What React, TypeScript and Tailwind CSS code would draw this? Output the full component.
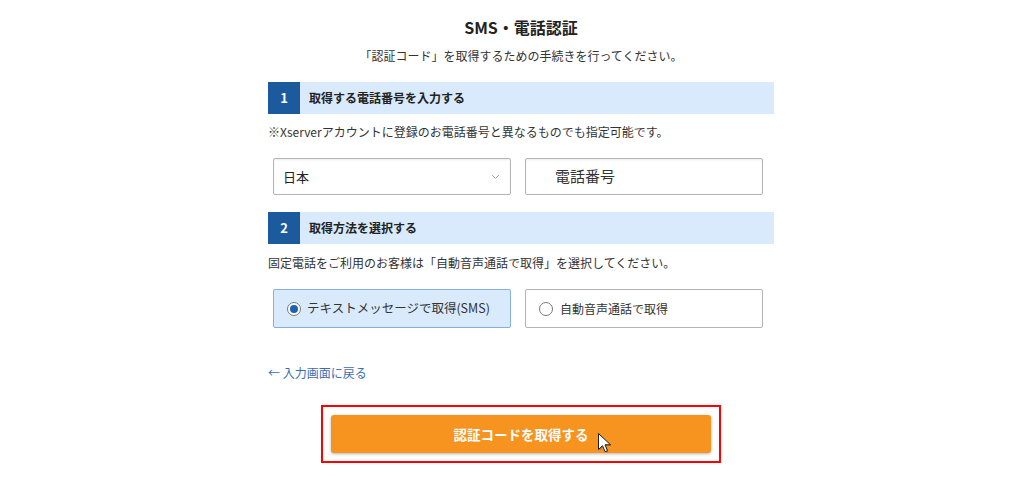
import React from "react";

export default function App() {
  const font = { fontFamily: '"Noto Sans CJK JP", "Noto Sans", sans-serif' };
  return (
    <div className="w-[1032px] h-[478px] bg-white overflow-hidden relative text-[#333]" style={font}>
      <div className="ml-[268px] w-[506px] flex flex-col">
        <h1 className="pt-[15px] text-center text-[16px] leading-[24px] font-bold text-[#222]">SMS・電話認証</h1>
        <p className="mt-[7px] text-center text-[12px] leading-[20px]">「認証コード」を取得するための手続きを行ってください。</p>

        <div className="mt-[16px] h-[32px] flex items-center bg-[#d8eafc]">
          <div className="w-[32px] h-[32px] bg-[#1b5a9c] text-white font-bold text-[13px] flex items-center justify-center">1</div>
          <div className="pl-[9px] text-[12px] font-bold text-[#222]">取得する電話番号を入力する</div>
        </div>
        <p className="mt-[8px] text-[12px] leading-[20px]">※Xserverアカウントに登録のお電話番号と異なるものでも指定可能です。</p>

        <div className="mt-[16px] ml-[5px] flex gap-[14px]">
          <div className="w-[238px] h-[37px] border border-[#b4b4b4] rounded-[2px] shadow-[inset_0_1px_2px_rgba(0,0,0,0.08)] flex items-center justify-between pl-[9px] pr-[10px]">
            <span className="text-[13px] text-[#222]">日本</span>
            <svg width="9" height="6" viewBox="0 0 9 6" fill="none">
              <path d="M1 1l3.5 3.5L8 1" stroke="#aaa" strokeWidth="1" />
            </svg>
          </div>
          <div className="w-[238px] h-[37px] border border-[#b4b4b4] rounded-[2px] shadow-[inset_0_1px_2px_rgba(0,0,0,0.08)] flex items-center pl-[29px]">
            <span className="text-[15px] text-[#333]">電話番号</span>
          </div>
        </div>

        <div className="mt-[17px] h-[32px] flex items-center bg-[#d8eafc]">
          <div className="w-[32px] h-[32px] bg-[#1b5a9c] text-white font-bold text-[13px] flex items-center justify-center">2</div>
          <div className="pl-[9px] text-[12px] font-bold text-[#222]">取得方法を選択する</div>
        </div>
        <p className="mt-[9px] text-[12px] leading-[20px]">固定電話をご利用のお客様は「自動音声通話で取得」を選択してください。</p>

        <div className="mt-[16px] ml-[5px] flex gap-[14px]">
          <div className="w-[238px] h-[39px] border border-[#85b0dc] bg-[#d8eafc] rounded-[2px] flex items-center pl-[13px]">
            <span className="w-[14px] h-[14px] rounded-full border border-[#777] bg-white flex items-center justify-center">
              <span className="w-[8px] h-[8px] rounded-full bg-[#1b62b0]" />
            </span>
            <span className="ml-[6px] text-[12.5px] text-[#333]">テキストメッセージで取得(SMS)</span>
          </div>
          <div className="w-[238px] h-[39px] border border-[#b4b4b4] bg-white rounded-[2px] flex items-center pl-[13px]">
            <span className="w-[14px] h-[14px] rounded-full border border-[#777] bg-white" />
            <span className="ml-[7px] text-[12px] text-[#333]">自動音声通話で取得</span>
          </div>
        </div>

        <a className="mt-[35px] text-[12px] leading-[20px] text-[#3a6eae]">← 入力画面に戻る</a>

        <div className="mt-[22px] mx-auto w-[400px] h-[58px] border-2 border-[#f00] p-[8px]">
          <div className="w-[380px] h-[38px] bg-[#f7941f] rounded-[3px] shadow-[0_1px_3px_rgba(0,0,0,0.3)] flex items-center justify-center">
            <span className="text-white font-bold text-[13.5px]">認証コードを取得する</span>
          </div>
        </div>
      </div>

      <svg className="absolute left-[597px] top-[432px]" width="16" height="22" viewBox="0 0 16 22">
        <path d="M1.5 1.5v16l4-3.8 2.6 6 2.4-1-2.5-5.9h5.5z" fill="rgba(0,0,0,0.25)" transform="translate(1 1)" />
        <path d="M1.5 1.5v16l4-3.8 2.6 6 2.4-1-2.5-5.9h5.5z" fill="#fff" stroke="#222" strokeWidth="1" strokeLinejoin="round" />
      </svg>
    </div>
  );
}
